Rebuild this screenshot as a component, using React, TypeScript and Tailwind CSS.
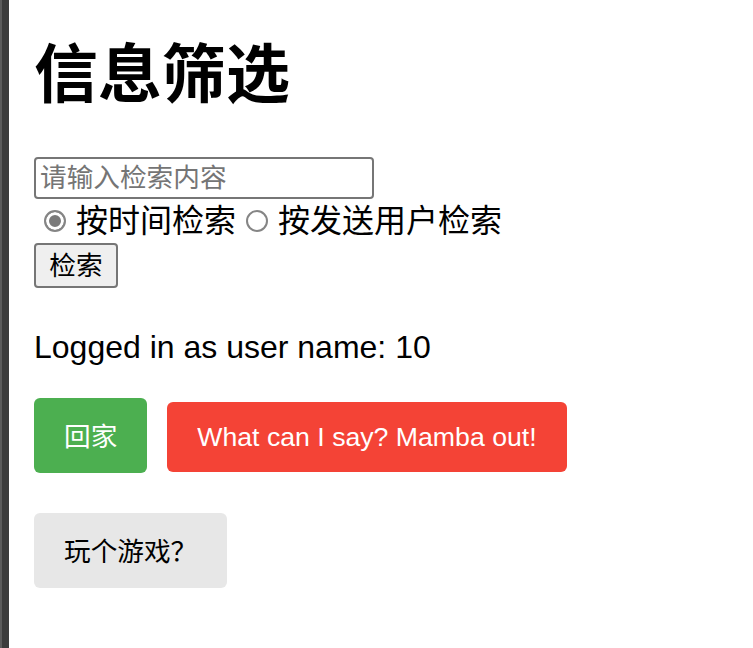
import { useState } from 'react';

const font = 'font-["Liberation_Sans","Noto_Sans_CJK_SC",sans-serif]';

function Radio({ checked, label, onSelect }: { checked: boolean; label: string; onSelect: () => void }) {
  return (
    <label className="flex items-center cursor-pointer">
      <input
        type="radio"
        name="mode"
        checked={checked}
        onChange={onSelect}
        className="appearance-none ml-[10px] mr-[10px] h-[22px] w-[22px] shrink-0 rounded-full border-2 border-[#858585] bg-white checked:bg-[#7a7a7a] checked:shadow-[inset_0_0_0_3px_white]"
      />
      <span>{label}</span>
    </label>
  );
}

export default function App() {
  const [mode, setMode] = useState<'time' | 'user'>('time');
  const [query, setQuery] = useState('');

  return (
    <div className={`flex min-h-screen bg-white text-black ${font}`}>
      <div className="w-[9px] shrink-0 border-l-2 border-[#5c5c5c] bg-[#3c3c3c]" />

      <div className="flex-1 pl-[25px] pt-[35px]">
        <h1 className="text-[64px] font-bold leading-[80px]">信息筛选</h1>

        <input
          type="text"
          value={query}
          onChange={(e) => setQuery(e.target.value)}
          placeholder="请输入检索内容"
          className="mt-[42px] block h-[42px] w-[340px] rounded-[4px] border-2 border-[#767676] px-[4px] text-[26.67px] leading-[36px] outline-none placeholder:text-[#757575]"
        />

        <div className="flex h-[44px] items-center text-[32px] leading-[44px]">
          <Radio checked={mode === 'time'} label="按时间检索" onSelect={() => setMode('time')} />
          <Radio checked={mode === 'user'} label="按发送用户检索" onSelect={() => setMode('user')} />
        </div>

        <button className="block h-[45px] w-[84px] rounded-[4px] border-2 border-[#767676] bg-[#efefef] text-[26.67px] leading-[36px]">
          检索
        </button>

        <p className="mt-[41px] text-[32px] leading-[37px]">Logged in as user name: 10</p>

        <div className="mt-[32px] flex items-start gap-[20px]">
          <button className="h-[75px] rounded-[6px] bg-[#4caf50] px-[30px] pt-[4px] text-[26.67px] leading-[35px] text-white">
            回家
          </button>
          <button className="mt-[4px] h-[70px] rounded-[6px] bg-[#f44336] px-[30px] text-[26.67px] leading-[30px] text-white">
            What can I say? Mamba out!
          </button>
        </div>

        <button className="mt-[40px] block h-[75px] rounded-[6px] bg-[#e7e7e7] px-[30px] pt-[3px] text-[26.67px] leading-[35px] text-black">
          玩个游戏？
        </button>
      </div>
    </div>
  );
}
